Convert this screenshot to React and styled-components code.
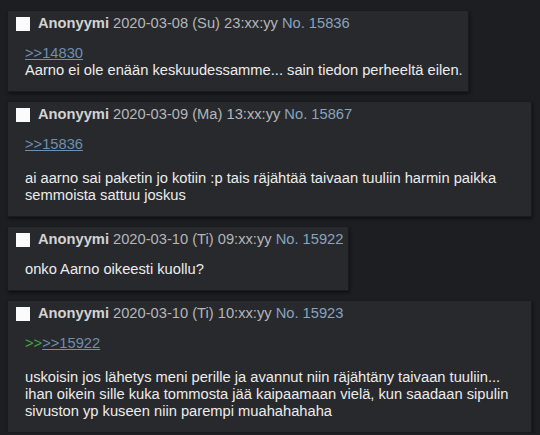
import React from 'react';
import styled, { createGlobalStyle } from 'styled-components';

const GlobalStyle = createGlobalStyle`
  html, body {
    margin: 0;
    padding: 0;
    background: #1d1e21;
  }

  body {
    font-family: "Liberation Sans", Arial, sans-serif;
    font-size: 14.7px;
    line-height: 17px;
    color: #ececec;
  }
`;

const Thread = styled.div`
  display: flex;
  flex-direction: column;
  align-items: flex-start;
  gap: 9px;
  padding: 10px 0 0 7px;
`;

const Post = styled.div`
  max-width: 525px;
  box-sizing: border-box;
  background: #28292d;
  border: 1px solid #1a1b1d;
  box-shadow: 1px 2px 3px rgba(0, 0, 0, 0.45);
  padding: 4px 5px 0 8px;
`;

const Header = styled.div`
  display: flex;
  align-items: center;
  white-space: nowrap;
`;

const Check = styled.span`
  width: 14px;
  height: 14px;
  background: #fbfbfb;
  margin-right: 8px;
  flex-shrink: 0;
`;

const Name = styled.span`
  font-weight: bold;
  color: #d2d3d4;
  margin-right: 4px;
`;

const Date = styled.span`
  color: #b4b6b8;
  margin-right: 4px;
`;

const PostNo = styled.span`
  color: #8aa3bd;
`;

const Message = styled.div`
  margin: 13px 0 12px 9px;
`;

const QuoteLink = styled.a`
  color: #6e8fb0;
  text-decoration: underline;
`;

const Green = styled.span`
  color: #4aa24a;
`;

const posts = [
  {
    date: '2020-03-08 (Su) 23:xx:yy',
    no: 15836,
    quote: '>>14830',
    lines: ['Aarno ei ole enään keskuudessamme... sain tiedon perheeltä eilen.'],
  },
  {
    date: '2020-03-09 (Ma) 13:xx:yy',
    no: 15867,
    quote: '>>15836',
    gap: true,
    lines: ['ai aarno sai paketin jo kotiin :p tais räjähtää taivaan tuuliin harmin paikka semmoista sattuu joskus'],
  },
  {
    date: '2020-03-10 (Ti) 09:xx:yy',
    no: 15922,
    lines: ['onko Aarno oikeesti kuollu?'],
  },
  {
    date: '2020-03-10 (Ti) 10:xx:yy',
    no: 15923,
    green: '>>',
    quote: '>>15922',
    gap: true,
    lines: [
      'uskoisin jos lähetys meni perille ja avannut niin räjähtäny taivaan tuuliin...',
      'ihan oikein sille kuka tommosta jää kaipaamaan vielä, kun saadaan sipulin sivuston yp kuseen niin parempi muahahahaha',
    ],
  },
];

const PostItem = ({ date, no, quote, green, gap, lines }) => (
  <Post>
    <Header>
      <Check />
      <Name>Anonyymi</Name>
      <Date>{date}</Date>
      <PostNo>No. {no}</PostNo>
    </Header>
    <Message>
      {quote && (
        <div>
          {green && <Green>{green}</Green>}
          <QuoteLink href="#">{quote}</QuoteLink>
        </div>
      )}
      {gap && <br />}
      {lines.map((line, i) => (
        <div key={i}>{line}</div>
      ))}
    </Message>
  </Post>
);

export default function App() {
  return (
    <>
      <GlobalStyle />
      <Thread>
        {posts.map(post => (
          <PostItem key={post.no} {...post} />
        ))}
      </Thread>
    </>
  );
}
